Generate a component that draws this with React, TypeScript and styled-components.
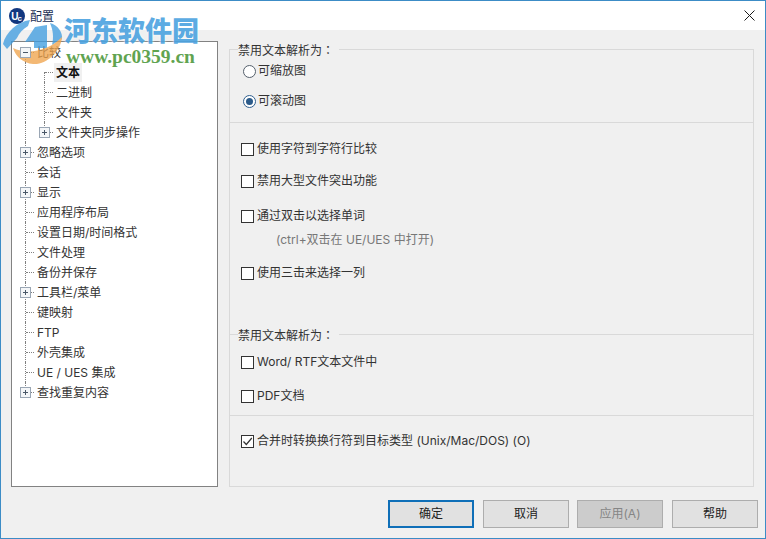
import styled, {createGlobalStyle} from 'styled-components';

const GlobalStyle = createGlobalStyle`
	html, body {
		margin: 0;
		padding: 0;
		background: #fff;
	}
`;

type Guide = 'none' | 'full' | 'first' | 'last';

interface TreeItem {
	label: string;
	level: 0 | 1;
	guide: Guide;
	expander?: 'plus' | 'minus';
	selected?: boolean;
}

const treeItems: TreeItem[] = [
	{label: '比较', level: 0, guide: 'first', expander: 'minus'},
	{label: '文本', level: 1, guide: 'first', selected: true},
	{label: '二进制', level: 1, guide: 'full'},
	{label: '文件夹', level: 1, guide: 'full'},
	{label: '文件夹同步操作', level: 1, guide: 'last', expander: 'plus'},
	{label: '忽略选项', level: 0, guide: 'full', expander: 'plus'},
	{label: '会话', level: 0, guide: 'full'},
	{label: '显示', level: 0, guide: 'full', expander: 'plus'},
	{label: '应用程序布局', level: 0, guide: 'full'},
	{label: '设置日期/时间格式', level: 0, guide: 'full'},
	{label: '文件处理', level: 0, guide: 'full'},
	{label: '备份并保存', level: 0, guide: 'full'},
	{label: '工具栏/菜单', level: 0, guide: 'full', expander: 'plus'},
	{label: '键映射', level: 0, guide: 'full'},
	{label: 'FTP', level: 0, guide: 'full'},
	{label: '外壳集成', level: 0, guide: 'full'},
	{label: 'UE / UES 集成', level: 0, guide: 'full'},
	{label: '查找重复内容', level: 0, guide: 'last', expander: 'plus'},
];

const App = () => {
	return (
		<>
			<GlobalStyle />
			<Window>
				<TitleBar>
					<AppIcon viewBox="0 0 16 16">
						<circle cx="8" cy="8" r="8" fill="#12377f" />
						<text x="2.2" y="11.5" fontSize="10" fontWeight="700" fill="#fff" fontFamily="Liberation Sans, sans-serif">U</text>
						<text x="8.6" y="12.5" fontSize="8" fontWeight="700" fill="#fff" fontFamily="Liberation Sans, sans-serif">c</text>
					</AppIcon>
					<TitleText>配置</TitleText>
					<CloseIcon viewBox="0 0 11 11">
						<path d="M0.5 0.5 L10.5 10.5 M10.5 0.5 L0.5 10.5" stroke="#1a1a1a" strokeWidth="1" fill="none" />
					</CloseIcon>
				</TitleBar>
				<Body>
					<Main>
						<Tree>
							{treeItems.map(item => (
								<TreeRow key={item.label}>
									{item.level === 1 && <OuterGuide />}
									<Connector $guide={item.guide}>
										{item.expander && (
											<Expander viewBox="0 0 11 11">
												<rect x="0.5" y="0.5" width="10" height="10" fill="#f4f6f8" stroke="#9aa6b4" />
												<path d={item.expander === 'plus' ? 'M3 5.5 H8 M5.5 3 V8' : 'M3 5.5 H8'} stroke="#4a5868" fill="none" />
											</Expander>
										)}
									</Connector>
									<TreeLabel $selected={item.selected}>{item.label}</TreeLabel>
								</TreeRow>
							))}
						</Tree>
						<Panel>
							<Section>
								<Legend>禁用文本解析为<Colon>：</Colon></Legend>
								<OptionRow $top={3} $left={13}>
									<Radio />
									<OptionText $gap={2}>可缩放图</OptionText>
								</OptionRow>
								<OptionRow $top={10} $left={13}>
									<Radio $checked />
									<OptionText $gap={2}>可滚动图</OptionText>
								</OptionRow>
							</Section>
							<Section $height={212}>
								<OptionRow $top={16}>
									<Checkbox />
									<OptionText>使用字符到字符行比较</OptionText>
								</OptionRow>
								<OptionRow $top={12}>
									<Checkbox />
									<OptionText>禁用大型文件突出功能</OptionText>
								</OptionRow>
								<OptionRow $top={15}>
									<Checkbox />
									<OptionText>通过双击以选择单词</OptionText>
								</OptionRow>
								<Hint>(ctrl+双击在 UE/UES 中打开)</Hint>
								<OptionRow $top={13}>
									<Checkbox />
									<OptionText>使用三击来选择一列</OptionText>
								</OptionRow>
							</Section>
							<Section $height={81}>
								<Legend>禁用文本解析为<Colon>：</Colon></Legend>
								<OptionRow $top={9}>
									<Checkbox />
									<OptionText>Word/ RTF文本文件中</OptionText>
								</OptionRow>
								<OptionRow $top={14}>
									<Checkbox />
									<OptionText>PDF文档</OptionText>
								</OptionRow>
							</Section>
							<Section $height={71}>
								<OptionRow $top={15}>
									<Checkbox>
										<svg viewBox="0 0 11 11" width="11" height="11">
											<path d="M1.5 5.5 L4.3 8.5 L9.8 2" stroke="#333" strokeWidth="1.2" fill="none" />
										</svg>
									</Checkbox>
									<OptionText>合并时转换换行符到目标类型 (Unix/Mac/DOS) (O)</OptionText>
								</OptionRow>
							</Section>
						</Panel>
					</Main>
					<Footer>
						<DialogButton $variant="primary">确定</DialogButton>
						<DialogButton>取消</DialogButton>
						<DialogButton $variant="disabled">应用(A)</DialogButton>
						<DialogButton>帮助</DialogButton>
					</Footer>
				</Body>
				<Watermark>
					<WatermarkLogo viewBox="0 0 60 54">
						<path d="M0 29 C3 17 14 7 27 5 L25 11 C20 14 16 18 14 23 L4 34 Z" fill="#3f9de0" />
						<path d="M22 27 L32 12 L44 10 L44 33 L31 33 L31 26 Z" fill="#3f9de0" />
						<path d="M47 8 C55 10 60 18 59 24 C56 26 52 28 49 30 C51 22 50 15 47 8 Z" fill="#3f9de0" />
						<path d="M10 33 C24 40 46 36 59 22 C58 36 44 50 30 49 C20 48 13 42 10 33 Z" fill="#f0a44c" />
					</WatermarkLogo>
					<WatermarkText>
						<WatermarkTitle>河东软件园</WatermarkTitle>
						<WatermarkUrl>www.pc0359.cn</WatermarkUrl>
					</WatermarkText>
				</Watermark>
			</Window>
		</>
	);
};

const FONT = `Inter, "Noto Sans CJK SC", sans-serif`;

const Window = styled.div`
	position: relative;
	width: 766px;
	height: 539px;
	box-sizing: border-box;
	border: 1px solid #3c8cc6;
	display: flex;
	flex-direction: column;
	overflow: hidden;
	font-family: ${FONT};
	font-size: 12px;
	color: #333;
`;

const TitleBar = styled.div`
	height: 29px;
	flex: none;
	background: #fff;
	display: flex;
	align-items: center;
	padding: 0 10px 0 8px;
`;

const AppIcon = styled.svg`
	width: 16px;
	height: 16px;
`;

const TitleText = styled.span`
	margin-left: 5px;
	color: #1c2f55;
`;

const CloseIcon = styled.svg`
	width: 11px;
	height: 11px;
	margin-left: auto;
`;

const Body = styled.div`
	flex: 1;
	min-height: 0;
	background: #f0f0f0;
	display: flex;
	flex-direction: column;
	padding: 11px 7px 9px 10px;
`;

const Main = styled.div`
	display: flex;
	gap: 11px;
	height: 446px;
	padding-right: 4px;
`;

const Tree = styled.div`
	width: 207px;
	box-sizing: border-box;
	border: 1px solid #828282;
	background: #fff;
	flex: none;
`;

const TreeRow = styled.div`
	display: flex;
	height: 20px;
	align-items: stretch;
	padding-left: 7px;
`;

const OuterGuide = styled.span`
	width: 19px;
	flex: none;
	box-sizing: border-box;
	margin-left: 6px;
	margin-right: -6px;
	border-left: 1px dotted #808080;
`;

const guideHeight = (guide: Guide) => (guide === 'last' ? '10px' : '20px');

const Connector = styled.span<{$guide: Guide}>`
	position: relative;
	width: 16px;
	flex: none;
	display: flex;
	align-items: center;
	&::before {
		content: '';
		position: absolute;
		left: 6px;
		top: ${p => (p.$guide === 'first' ? '10px' : '0')};
		height: ${p => (p.$guide === 'first' ? '10px' : guideHeight(p.$guide))};
		border-left: 1px dotted #808080;
	}
	&::after {
		content: '';
		position: absolute;
		left: 7px;
		width: 8px;
		top: 10px;
		border-top: 1px dotted #808080;
	}
`;

const Expander = styled.svg`
	position: relative;
	z-index: 1;
	width: 11px;
	height: 11px;
	margin-left: 1px;
`;

const TreeLabel = styled.span<{$selected?: boolean}>`
	align-self: center;
	line-height: 19px;
	padding: 0 2px;
	color: ${p => (p.$selected ? '#111' : '#333')};
	font-weight: ${p => (p.$selected ? 700 : 400)};
	background: ${p => (p.$selected ? '#f0f0f0' : 'transparent')};
`;

const Panel = styled.div`
	flex: 1;
	margin-top: 8px;
	box-sizing: border-box;
	border: 1px solid #d9d9d9;
	border-top: none;
	display: flex;
	flex-direction: column;
`;

const Section = styled.div<{$height?: number}>`
	box-sizing: border-box;
	height: ${p => p.$height ?? 73}px;
	border-top: 1px solid #d9d9d9;
	display: flex;
	flex-direction: column;
`;

const Legend = styled.div`
	align-self: flex-start;
	margin: -9px 0 0 8px;
	height: 17px;
	line-height: 17px;
	background: #f0f0f0;
	padding-right: 5px;
`;

const Colon = styled.span`
	font-family: "Noto Sans CJK TC", sans-serif;
`;

const OptionRow = styled.div<{$top: number; $left?: number}>`
	display: flex;
	align-items: center;
	height: 20px;
	margin-top: ${p => p.$top}px;
	padding-left: ${p => p.$left ?? 11}px;
`;

const OptionText = styled.span<{$gap?: number}>`
	margin: 0 0 4px ${p => p.$gap ?? 3}px;
	white-space: nowrap;
`;

const Checkbox = styled.span`
	width: 13px;
	height: 13px;
	box-sizing: border-box;
	border: 1px solid #333;
	background: #fff;
	flex: none;
	display: flex;
`;

const Radio = styled.span<{$checked?: boolean}>`
	width: 13px;
	height: 13px;
	box-sizing: border-box;
	border-radius: 50%;
	border: 1px solid ${p => (p.$checked ? '#2f5f8f' : '#55606c')};
	background: #fff;
	flex: none;
	display: flex;
	align-items: center;
	justify-content: center;
	&::after {
		content: '';
		display: ${p => (p.$checked ? 'block' : 'none')};
		width: 7px;
		height: 7px;
		border-radius: 50%;
		background: #2c5b8a;
	}
`;

const Hint = styled.div`
	height: 20px;
	line-height: 20px;
	margin: 4px 0 0 46px;
	color: #777;
`;

const Footer = styled.div`
	display: flex;
	justify-content: flex-end;
	gap: 9px;
	margin-top: 13px;
`;

const DialogButton = styled.button<{$variant?: 'primary' | 'disabled'}>`
	width: 86px;
	height: 28px;
	padding: 0 0 4px;
	box-sizing: border-box;
	font: inherit;
	border: ${p => (p.$variant === 'primary' ? '2px solid #0f6fb8' : '1px solid #adadad')};
	background: ${p => (p.$variant === 'disabled' ? '#cccccc' : '#e1e1e1')};
	color: ${p => (p.$variant === 'disabled' ? '#858585' : '#222')};
	margin-left: ${p => (p.$variant === 'disabled' ? '-1px' : '0')};
`;

const Watermark = styled.div`
	position: absolute;
	left: 2px;
	top: 14px;
	display: flex;
	opacity: 0.9;
	pointer-events: none;
`;

const WatermarkLogo = styled.svg`
	width: 60px;
	height: 54px;
	flex: none;
	opacity: 0.85;
`;

const WatermarkText = styled.div`
	display: flex;
	flex-direction: column;
	align-items: flex-start;
	margin-left: 1px;
`;

const WatermarkTitle = styled.div`
	font-family: "Noto Sans CJK SC", sans-serif;
	font-weight: 900;
	font-size: 27px;
	line-height: 30px;
	color: #4ba3e0;
	text-shadow: 0 0 3px #fff;
`;

const WatermarkUrl = styled.div`
	font-family: "Liberation Serif", serif;
	font-weight: 700;
	font-size: 19.5px;
	line-height: 20px;
	margin: 2px 0 0 2px;
	color: #4f9a3e;
	text-shadow: 0 0 2px #fff;
`;

export default App;
